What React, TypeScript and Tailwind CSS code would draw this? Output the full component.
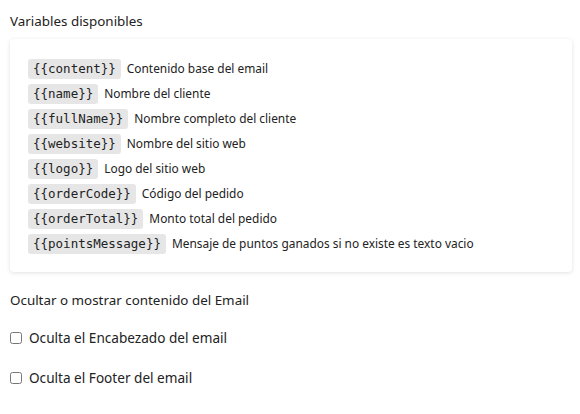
const variables = [
  { code: '{{content}}', label: 'Contenido base del email' },
  { code: '{{name}}', label: 'Nombre del cliente' },
  { code: '{{fullName}}', label: 'Nombre completo del cliente' },
  { code: '{{website}}', label: 'Nombre del sitio web' },
  { code: '{{logo}}', label: 'Logo del sitio web' },
  { code: '{{orderCode}}', label: 'Código del pedido' },
  { code: '{{orderTotal}}', label: 'Monto total del pedido' },
  { code: '{{pointsMessage}}', label: 'Mensaje de puntos ganados si no existe es texto vacio' },
];

export default function App() {
  return (
    <div className="w-[580px] h-[414px] bg-white text-[#222] px-[10px] pt-[11px] font-['Noto_Sans',sans-serif] overflow-hidden">
      {/* Variables */}
      <h2 className="text-[13.4px] leading-[20px]">Variables disponibles</h2>
      <div className="mt-[8px] w-[562px] bg-white rounded-[4px] shadow-[0_1px_4px_rgba(0,0,0,0.12)] pl-[18px] pr-4 pt-[20px] pb-[18px]">
        <ul className="flex flex-col gap-[5px]">
          {variables.map((v) => (
            <li key={v.code} className="flex items-center gap-[6px] h-[20px]">
              <code className="h-[20px] flex items-center px-[5px] rounded-[3px] bg-[#e6e6e6] text-[12.5px] text-[#222] font-['DejaVu_Sans_Mono',monospace]">
                {v.code}
              </code>
              <span className="text-[11.9px]">{v.label}</span>
            </li>
          ))}
        </ul>
      </div>

      {/* Ocultar */}
      <h2 className="mt-[18px] text-[13.4px] leading-[20px]">Ocultar o mostrar contenido del Email</h2>
      <div className="mt-[18px] flex flex-col gap-[20px]">
        <label className="flex items-center gap-[7px] text-[13.6px] leading-[20px]">
          <input type="checkbox" className="w-[12px] h-[12px] m-0" />
          Oculta el Encabezado del email
        </label>
        <label className="flex items-center gap-[7px] text-[13.6px] leading-[20px]">
          <input type="checkbox" className="w-[12px] h-[12px] m-0" />
          Oculta el Footer del email
        </label>
      </div>
    </div>
  );
}
